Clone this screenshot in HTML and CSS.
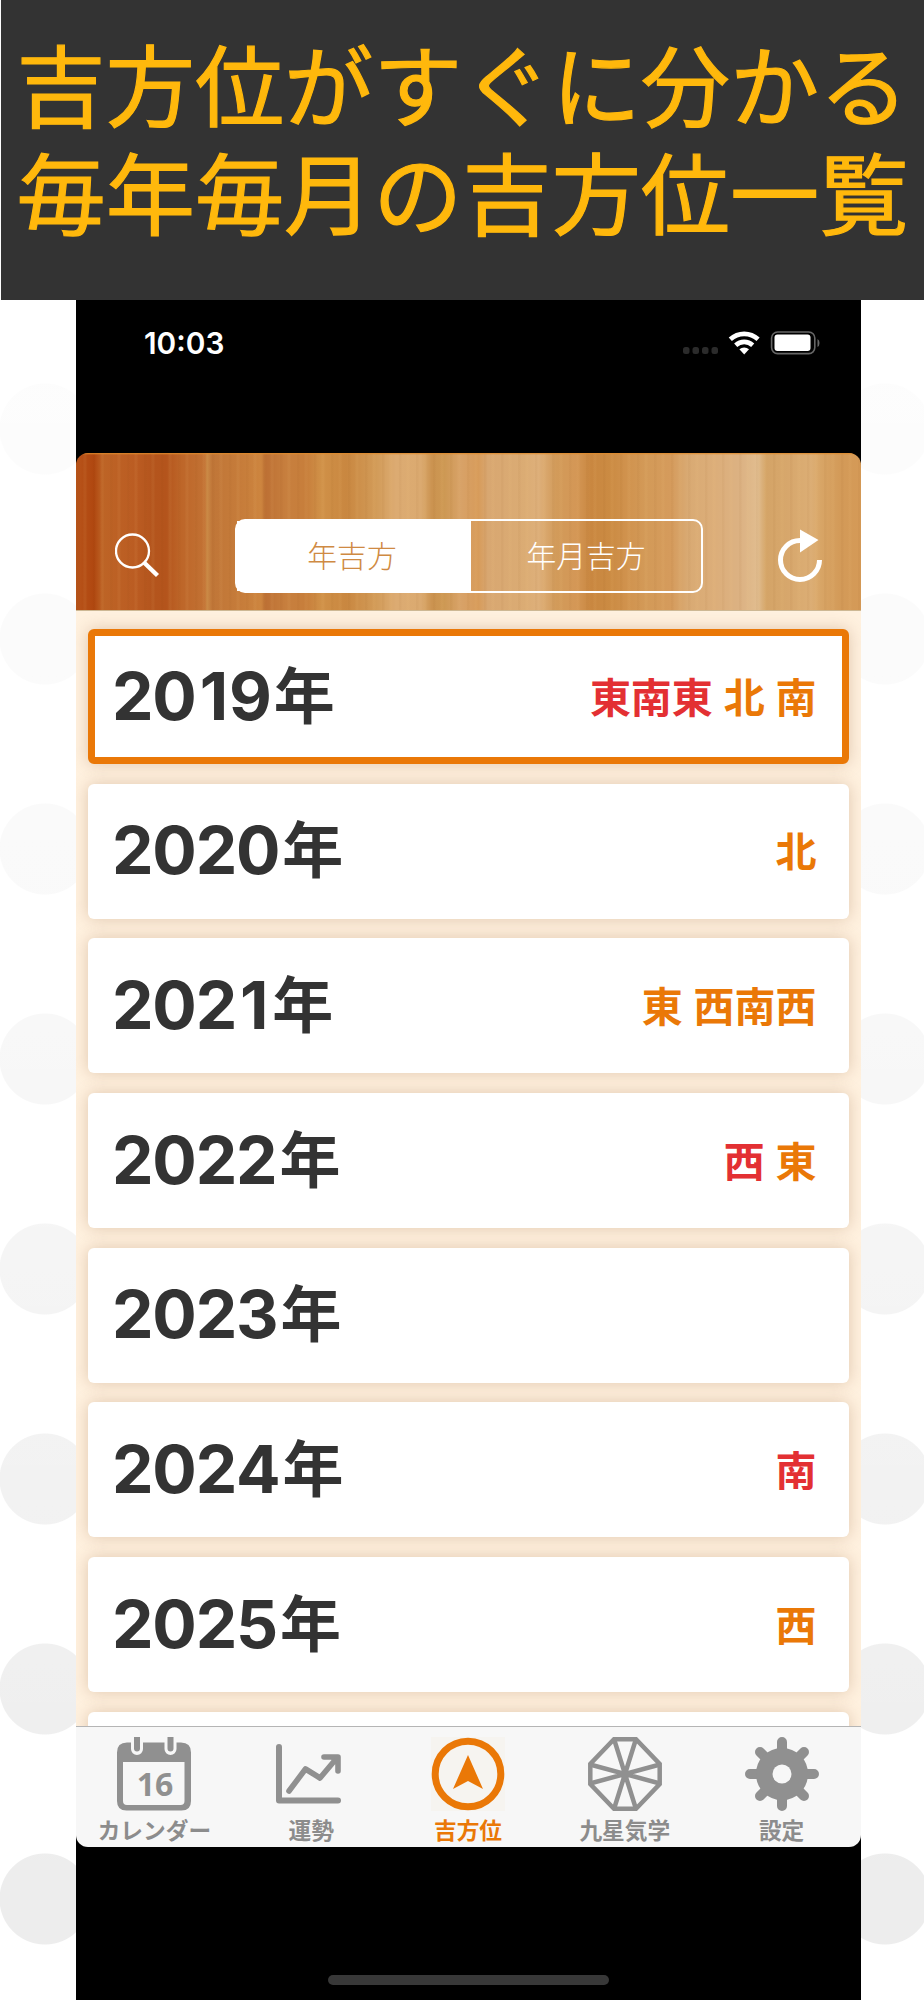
FILE: index.html
```html
<!DOCTYPE html>
<html lang="ja">
  <head>
    <meta charset="UTF-8" />
    <meta name="viewport" content="width=device-width, initial-scale=1.0" />
    <title>吉方位</title>
    <link rel="stylesheet" href="styles.css">
  </head>
  <body>
    <header class="banner">
      <p>吉方位がすぐに分かる</p>
      <p>毎年毎月の吉方位一覧</p>
    </header>
    <main class="phone">
      <div class="status">
        <span class="time">10:03</span>
        <svg width="140" height="24" viewBox="0 0 140 24">
          <g fill="#2b2b2b">
            <rect x="0" y="16" width="6.5" height="7" rx="2.5" />
            <rect x="9.5" y="16" width="6.5" height="7" rx="2.5" />
            <rect x="19" y="16" width="6.5" height="7" rx="2.5" />
            <rect x="28.5" y="16" width="6.5" height="7" rx="2.5" />
          </g>
          <g fill="none" stroke="#fff" stroke-width="4.6">
            <path d="M47.3 8.3a20.5 20.5 0 0 1 27.8 0" />
            <path d="M52.7 14.2a12.6 12.6 0 0 1 17 0" />
          </g>
          <path d="M56.4 18.3a7.2 7.2 0 0 1 9.6 0L61.2 23.4z" fill="#fff" />
          <rect x="88.6" y="1" width="43.2" height="21.6" rx="6" fill="none" stroke="#666" stroke-width="1.6" />
          <rect x="91.5" y="3.6" width="36" height="16.4" rx="3" fill="#fff" />
          <path d="M134.5 8v8q2-1 2-4t-2-4z" fill="#666" />
        </svg>
      </div>
      <nav class="toolbar">
        <svg class="search" width="46" height="46" viewBox="0 0 46 46" fill="none" stroke="#fff">
          <circle cx="17.5" cy="18" r="16.5" stroke-width="2.3" />
          <path d="M28.5 29L42.5 42.5" stroke-width="4.4" />
        </svg>
        <div class="segment">
          <span class="on">年吉方</span>
          <span>年月吉方</span>
        </div>
        <svg class="reload" width="46" height="56" viewBox="0 0 46 56">
          <path d="M23 12.5a19.5 19.5 0 1 0 19.5 19.5" fill="none" stroke="#fff" stroke-width="5" />
          <path d="M23 1.5v23L41.5 12z" fill="#fff" />
        </svg>
      </nav>
      <ul class="list">
        <li class="current"><b>20<u>1</u>9<i>年</i></b><span><em>東南東</em> 北 南</span></li>
        <li><b>2020<i>年</i></b><span>北</span></li>
        <li><b>202<u>1</u><i>年</i></b><span>東 西南西</span></li>
        <li><b>2022<i>年</i></b><span><em>西</em> 東</span></li>
        <li><b>2023<i>年</i></b></li>
        <li><b>2024<i>年</i></b><span><em>南</em></span></li>
        <li><b>2025<i>年</i></b><span>西</span></li>
        <li></li>
      </ul>
      <footer class="tabs">
        <div class="tab">
          <svg viewBox="0 0 74 74">
            <path fill="#909090" fill-rule="evenodd" d="M10 5.5h54q10 0 10 10V64q0 9.5-9.5 9.5h-55Q0 73.5 0 64V15.5q0-10 10-10zM6 25v39q0 4 4 4h53.5q4 0 4-4V25z" />
            <path d="M20 0v12M53.5 0v12" stroke="#f7f7f7" stroke-width="12" stroke-linecap="round" />
            <path d="M20 0v11.5M53.5 0v11.5" stroke="#909090" stroke-width="6" stroke-linecap="round" />
            <text x="38" y="58.5" text-anchor="middle">16</text>
          </svg>
          カレンダー
        </div>
        <div class="tab">
          <svg viewBox="0 0 74 74" fill="none" stroke="#909090" stroke-linecap="round" stroke-linejoin="round">
            <path d="M5 10v53.5h59" stroke-width="6" />
            <path d="M15 54L31.5 32l14.5 9L62 22M50 20H64v14" stroke-width="5.6" />
            <path d="M57 20h7v7z" fill="#909090" stroke-width="3" />
          </svg>
          運勢
        </div>
        <div class="tab active">
          <svg viewBox="0 0 74 74">
            <path d="M0 0h74v74H0z" fill="#f6f4f0" />
            <circle cx="37" cy="37" r="32.8" fill="none" stroke="#ea7807" stroke-width="7" />
            <path d="M37 18l15 34-15-8-15 8z" fill="#ea7807" />
          </svg>
          吉方位
        </div>
        <div class="tab">
          <svg viewBox="0 0 74 74" fill="none" stroke="#909090" stroke-width="4.5">
            <path d="M26 2.3h22L71.7 27v20L48 71.7H26L2.3 47V27z" />
            <path d="M26 2l22 70M48 2L26 72M2 27.5l70 19M2 46.5l70-19" />
          </svg>
          九星気学
        </div>
        <div class="tab">
          <svg viewBox="0 0 74 74">
            <g stroke="#909090" stroke-linecap="round" fill="none">
              <path d="M37 5v64M5 37h64M15 15l44 44M59 15L15 59" stroke-width="10" />
              <circle cx="37" cy="37" r="17.5" stroke-width="17" />
            </g>
            <circle cx="37" cy="37" r="9.5" fill="#f7f7f7" />
          </svg>
          設定
        </div>
      </footer>
      <div class="home"></div>
    </main>
  </body>
</html>
```
FILE: styles.css
```css
* {
  box-sizing: border-box;
}

body {
  margin: 0;
  height: 2000px;
  overflow: hidden;
  font-family: "Noto Sans CJK JP", sans-serif;
  background:
    linear-gradient(rgba(255, 255, 255, 0.9) 300px, rgba(255, 255, 255, 0.7) 900px, rgba(255, 255, 255, 0) 1900px),
    radial-gradient(circle, #ededed 45px, transparent 46px) -60px 1794px / 210px 210px,
    #fff;
}

.banner {
  height: 300px;
  margin-left: 1px;
  padding-top: 28px;
  background: #333;
}

.banner p {
  margin: 0;
  height: 108px;
  line-height: 108px;
  font-size: 89.2px;
  color: #ffb80c;
  -webkit-text-stroke: 1.2px #ffb80c;
  text-align: center;
  white-space: nowrap;
}

.phone {
  display: flex;
  flex-direction: column;
  width: 785px;
  height: 1700px;
  margin-left: 76px;
  background: #000;
}

.status {
  display: flex;
  justify-content: space-between;
  height: 153px;
  padding: 31px 38px 0 68px;
}

.time {
  font: 600 29.8px/24px Inter, sans-serif;
  color: #fff;
}

.toolbar {
  display: flex;
  height: 158px;
  padding-top: 66px;
  border-radius: 12px 12px 0 0;
  border-bottom: 1px solid #cdb894;
  background:
    linear-gradient(#df8a2b, transparent 2px),
    repeating-linear-gradient(90deg, rgba(120, 60, 0, 0.04) 0 2px, transparent 3px 7px, rgba(255, 210, 140, 0.06) 8px 10px, transparent 11px 17px),
    linear-gradient(90deg,
      #b8541a 0, #b04710 18px, #bd6426 27px, #bb5c22 60px, #b4551d 76px,
      #b4541c 90px, #bd6528 104px, #c27234 129px, #cb8b47 131px, #c07638 136px,
      #c67c3a 165px, #cd853f 185px, #bd7034 190px, #c77f3e 210px, #c77e3b 230px,
      #d09148 245px, #c98740 270px, #d29b58 300px, #dcab72 320px, #dbaa70 345px,
      #cb9350 356px, #cd9853 368px, #d8a268 385px, #d79b5a 402px, #d8a771 412px,
      #dbac74 450px, #deb07b 462px, #d29b5a 480px, #d49756 500px, #c98740 515px,
      #cb8b43 535px, #d0924d 550px, #d39a58 570px, #d59b5c 595px, #d9aa73 612px,
      #dcae7a 640px, #dcb283 665px, #e1bd8f 682px, #d4a467 690px, #d7a76c 712px,
      #dcae75 735px, #d8a566 745px, #d39a58 765px, #d59a57 785px);
}

.search {
  margin: 14px 0 0 39px;
}

.segment {
  display: flex;
  width: 468px;
  height: 74px;
  margin-left: 74px;
  border: 2px solid #fff;
  border-radius: 10px;
  font-weight: 300;
  font-size: 29.8px;
  line-height: 66px;
  text-align: center;
  color: #fff;
}

.segment span {
  flex: 1;
}

.segment .on {
  flex: none;
  width: 234px;
  padding-right: 4px;
  color: #cf8a43;
  background: #fff;
}

.reload {
  margin: 9px 0 0 74px;
}

.list {
  flex: none;
  height: 1115px;
  margin: 0;
  padding: 18px 12.5px 0 12px;
  overflow: hidden;
  list-style: none;
  background: #fff1df;
}

.list li {
  display: flex;
  align-items: center;
  justify-content: space-between;
  height: 135px;
  margin-bottom: 19.7px;
  padding: 0 32px 0 24px;
  border-radius: 6px;
  background: #fff;
  box-shadow: 0 0 16px rgba(150, 100, 60, 0.3);
}

.list .current {
  padding: 0 25px 0 17px;
  border: 7px solid #ea7807;
}

.list b {
  font: 700 66px/80px Inter, "Noto Sans CJK JP", sans-serif;
  font-kerning: none;
  letter-spacing: -1.2px;
  color: #333;
}

/* Inter's 1 is too narrow next to the other digits */
.list u {
  padding: 0 2px 0 4px;
  text-decoration: none;
}

.list i {
  position: relative;
  top: -1px;
  margin-left: 3px;
  font-style: normal;
  font-size: 61px;
}

.list span {
  padding-bottom: 4px;
  font-weight: 700;
  font-size: 41px;
  line-height: 60px;
  word-spacing: 1.5px;
  color: #ea7807;
}

.list em {
  font-style: normal;
  color: #e33033;
}

.tabs {
  display: flex;
  flex: none;
  height: 121px;
  padding: 10px 1px 0 0;
  border-top: 1px solid #b5b5b5;
  border-radius: 0 0 12px 12px;
  background: #f7f7f7;
}

.tab {
  display: flex;
  flex: 1;
  flex-direction: column;
  align-items: center;
  font-weight: 700;
  font-size: 22.7px;
  line-height: 38px;
  color: #8c8c8c;
}

.tab svg {
  flex: none;
  width: 74px;
  height: 74px;
}

.tab text {
  font: 700 32px "Open Sans", sans-serif;
  fill: #909090;
}

.active {
  color: #ea7807;
}

.home {
  flex: none;
  width: 281px;
  height: 10px;
  margin: 128px auto 0;
  border-radius: 5px;
  background: #383838;
}
```
